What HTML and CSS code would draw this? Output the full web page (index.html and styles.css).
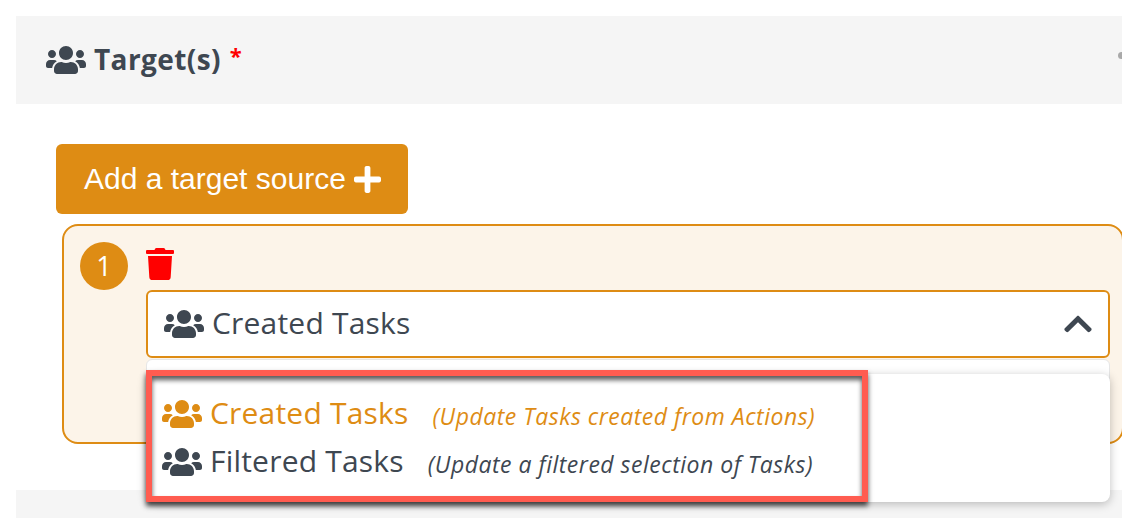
FILE: index.html
```html
<!DOCTYPE html>
<html>

<head>
    <meta charset="UTF-8">
    <title>Target(s)</title>
    <link rel="stylesheet" href="styles.css">
</head>

<body>
    <svg class="icon_defs" xmlns="http://www.w3.org/2000/svg">
        <symbol id="i_users" viewBox="0 0 640 512">
            <path d="M96 224c35.3 0 64-28.7 64-64s-28.7-64-64-64-64 28.7-64 64 28.7 64 64 64zm448 0c35.3 0 64-28.7 64-64s-28.7-64-64-64-64 28.7-64 64 28.7 64 64 64zm32 32h-64c-17.6 0-33.5 7.1-45.1 18.6 40.3 22.1 68.9 62 75.1 109.4h66c17.7 0 32-14.3 32-32v-32c0-35.3-28.7-64-64-64zm-256 0c61.9 0 112-50.1 112-112S381.9 32 320 32 208 82.1 208 144s50.1 112 112 112zm76.8 32h-8.3c-20.8 10-43.9 16-68.5 16s-47.6-6-68.5-16h-8.3C179.6 288 128 339.6 128 403.2V432c0 26.5 21.5 48 48 48h288c26.5 0 48-21.5 48-48v-28.8c0-63.6-51.6-115.2-115.2-115.2zm-223.7-13.4C161.5 263.1 145.6 256 128 256H64c-35.3 0-64 28.7-64 64v32c0 17.7 14.3 32 32 32h65.9c6.3-47.4 34.9-87.3 75.2-109.4z" />
        </symbol>
    </svg>

    <div class="panel_head">
        <svg class="users"><use href="#i_users" /></svg>
        <span class="panel_title">Target(s)</span>
        <span class="required">*</span>
        <span class="panel_toggle"></span>
    </div>

    <div class="panel_body">
        <button class="add_btn" type="button">
            Add a target source
            <svg class="plus" viewBox="0 0 448 512">
                <path d="M416 208H272V64c0-17.67-14.33-32-32-32h-32c-17.67 0-32 14.33-32 32v144H32c-17.67 0-32 14.33-32 32v32c0 17.67 14.33 32 32 32h144v144c0 17.67 14.33 32 32 32h32c17.67 0 32-14.33 32-32V304h144c17.67 0 32-14.33 32-32v-32c0-17.67-14.33-32-32-32z" />
            </svg>
        </button>

        <div class="source_card">
            <div class="badge">1</div>
            <div class="source_main">
                <svg class="trash" viewBox="0 0 448 512">
                    <path d="M432 32H312l-9.4-18.7A24 24 0 0 0 281.1 0H166.8a23.72 23.72 0 0 0-21.4 13.3L136 32H16A16 16 0 0 0 0 48v32a16 16 0 0 0 16 16h416a16 16 0 0 0 16-16V48a16 16 0 0 0-16-16zM53.2 467a48 48 0 0 0 47.9 45h245.8a48 48 0 0 0 47.9-45L416 128H32z" />
                </svg>
                <div class="select_wrap">
                    <div class="select_box">
                        <svg class="users"><use href="#i_users" /></svg>
                        <span class="select_value">Created Tasks</span>
                        <svg class="chevron" viewBox="0 0 448 512">
                            <path d="M240.971 130.524l194.343 194.343c9.373 9.373 9.373 24.569 0 33.941l-22.667 22.667c-9.357 9.357-24.522 9.375-33.901.04L224 227.495 69.255 381.516c-9.379 9.335-24.544 9.317-33.901-.04l-22.667-22.667c-9.373-9.373-9.373-24.569 0-33.941L207.03 130.525c9.372-9.373 24.568-9.373 33.941-.001z" />
                        </svg>
                    </div>
                    <div class="menu_ghost"></div>
                    <ul class="menu">
                        <li class="menu_item active">
                            <svg class="users"><use href="#i_users" /></svg>
                            <span class="item_name">Created Tasks</span>
                            <em class="item_hint">(Update Tasks created from Actions)</em>
                        </li>
                        <li class="menu_item">
                            <svg class="users"><use href="#i_users" /></svg>
                            <span class="item_name">Filtered Tasks</span>
                            <em class="item_hint">(Update a filtered selection of Tasks)</em>
                        </li>
                    </ul>
                    <div class="marker"></div>
                </div>
            </div>
        </div>
    </div>

    <div class="panel_next"></div>
</body>

</html>
```

FILE: styles.css
```css
html,
body {
    height: 518px;
}

body {
    margin: 0;
    overflow: hidden;
    background-color: #ffffff;
    color: #3e4751;
    font-family: "Open Sans", "Lato", sans-serif;
}

.icon_defs {
    display: none;
}

.users {
    flex: none;
    width: 40px;
    height: 32px;
    fill: currentColor;
}

.panel_head {
    display: flex;
    align-items: center;
    position: relative;
    height: 88px;
    margin: 16px 0 0 16px;
    padding-left: 30px;
    background-color: #f5f5f5;
}

.panel_title {
    margin: -2px 0 0 8px;
    font-size: 28px;
    font-weight: 700;
    letter-spacing: 0.4px;
}

.required {
    margin: -10px 0 0 9px;
    color: #ff0000;
    font-size: 22px;
    font-weight: 700;
}

.panel_toggle {
    position: absolute;
    top: 36px;
    right: 0;
    width: 4px;
    height: 7px;
    border-radius: 4px 0 0 4px;
    background-color: #a9a9a9;
}

.panel_body {
    padding: 40px 0 0 56px;
}

.add_btn {
    display: flex;
    align-items: center;
    width: 352px;
    height: 70px;
    padding: 0 0 0 28px;
    border: none;
    border-radius: 6px;
    background-color: #de8c14;
    color: #ffffff;
    font-family: "Liberation Sans", Arial, sans-serif;
    font-size: 30px;
}

.plus {
    width: 27px;
    height: 31px;
    margin-left: 8px;
    fill: #ffffff;
}

.source_card {
    display: flex;
    box-sizing: border-box;
    width: 1062px;
    height: 220px;
    margin: 10px 0 0 6px;
    padding: 16px 12px 0 16px;
    border: 2px solid #de8c14;
    border-radius: 16px;
    background-color: #fcf4e9;
}

.badge {
    flex: none;
    width: 48px;
    height: 48px;
    border-radius: 50%;
    background-color: #de8c14;
    color: #ffffff;
    font-size: 27px;
    line-height: 48px;
    text-align: center;
}

.source_main {
    flex: 1;
    margin-left: 18px;
}

.trash {
    display: block;
    width: 28px;
    height: 32px;
    margin-top: 6px;
    fill: #ff0000;
}

.select_wrap {
    position: relative;
    margin-top: 10px;
}

.select_box {
    display: flex;
    align-items: center;
    box-sizing: border-box;
    height: 68px;
    padding: 0 16px;
    border: 2px solid #de8c14;
    border-radius: 6px;
    background-color: #ffffff;
}

.select_value {
    margin: -3px 0 0 8px;
    font-size: 30px;
    letter-spacing: 0.2px;
}

.chevron {
    width: 28px;
    height: 32px;
    margin-left: auto;
    fill: #3e4751;
}

.menu_ghost {
    position: absolute;
    top: 69px;
    left: 0;
    right: 0;
    height: 30px;
    border: 1px solid #e6e6e6;
    border-radius: 6px;
    background-color: #ffffff;
    box-sizing: border-box;
}

.menu {
    position: absolute;
    top: 84px;
    left: 0;
    right: 0;
    height: 128px;
    margin: 0;
    padding: 16px 0 0 16px;
    box-sizing: border-box;
    list-style: none;
    border-radius: 8px;
    background-color: #ffffff;
    box-shadow: 0 2px 10px rgba(0, 0, 0, 0.25);
}

.menu_item {
    display: flex;
    align-items: center;
    height: 48px;
}

.menu_item.active {
    color: #de8c14;
}

.item_name {
    margin: -3px 0 0 8px;
    font-size: 30px;
    letter-spacing: 0.2px;
}

.item_hint {
    margin: 3px 0 0 24px;
    font-size: 23px;
    letter-spacing: 0.5px;
}

.marker {
    position: absolute;
    top: 80px;
    left: 0;
    box-sizing: border-box;
    width: 722px;
    height: 132px;
    border: 6px solid #ff5c50;
    box-shadow: 0 4px 5px rgba(0, 0, 0, 0.7), inset 0 4px 5px rgba(0, 0, 0, 0.65);
}

.panel_next {
    height: 40px;
    margin: 46px 0 0 16px;
    background-color: #f5f5f5;
}
```
